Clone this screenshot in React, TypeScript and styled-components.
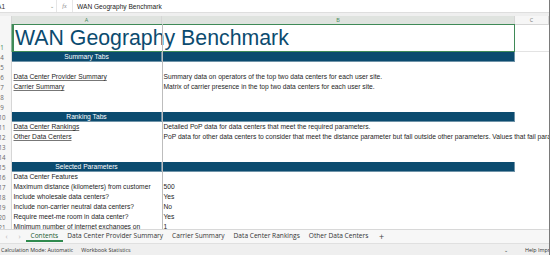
import styled, { createGlobalStyle } from "styled-components";

const Global = createGlobalStyle`
  html, body { margin: 0; padding: 0; background: #fff; }
  body {
    width: 550px;
    height: 255px;
    overflow: hidden;
    font-family: "Liberation Sans", Arial, sans-serif;
  }
`;

const BLUE = "#0b4b6f";
const GREEN = "#3f8a57";

const Window = styled.div`
  width: 550px;
  height: 255px;
  box-sizing: border-box;
  border-right: 1px solid #7a7a7a;
  display: flex;
  flex-direction: column;
  overflow: hidden;
`;

// formula bar ....
const FormulaBar = styled.div`
  height: 12px;
  flex: none;
  display: flex;
  align-items: center;
  background: #fff;
  font-size: 6.6px;
  color: #222;
`;

const NameBox = styled.div`
  width: 59px;
  height: 100%;
  display: flex;
  align-items: center;
  justify-content: space-between;
  box-sizing: border-box;
  padding: 0 2px 0 0;
  margin-left: -3px;
  color: #333;
`;

const Chevron = styled.span`
  font-size: 5px;
  color: #777;
`;

const Fx = styled.div`
  width: 15px;
  height: 100%;
  display: flex;
  align-items: center;
  justify-content: center;
  font-family: "Liberation Serif", serif;
  font-style: italic;
  font-size: 6px;
  color: #888;
  border-left: 1px solid #e6e6e6;
  border-right: 1px solid #e6e6e6;
  margin-right: 4px;
`;

const Gap = styled.div`
  height: 3px;
  flex: none;
  background: #efefef;
  border-top: 1px solid #dedede;
`;

// grid ....
const Sheet = styled.div`
  flex: 1;
  min-height: 0;
  position: relative;
  overflow: hidden;
  &::after {
    content: "";
    position: absolute;
    left: 162px;
    top: 8px;
    bottom: 0;
    width: 1px;
    background: #bdbdbd;
  }
`;

const Row = styled.div<{ $h: number }>`
  display: grid;
  grid-template-columns: 12px 150px 353px 1fr;
  height: ${(p) => p.$h}px;
`;

const ColHead = styled.div<{ $sel?: boolean }>`
  display: flex;
  align-items: center;
  justify-content: center;
  font-family: "Open Sans", sans-serif;
  font-size: 5.5px;
  color: ${(p) => (p.$sel ? GREEN : "#777")};
  background: ${(p) => (p.$sel ? "#dfe3df" : "#f6f6f6")};
  border-right: 1px solid #d6d6d6;
  border-bottom: 1px solid ${(p) => (p.$sel ? "#8fb59a" : "#d6d6d6")};
  box-sizing: border-box;
`;

const RowHead = styled.div<{ $sel?: boolean }>`
  display: flex;
  align-items: flex-end;
  overflow: hidden;
  background: #f6f6f6;
  border-right: 1px solid ${(p) => (p.$sel ? "#8fb59a" : "#d6d6d6")};
  box-sizing: border-box;
  font-family: "Open Sans", sans-serif;
  font-size: 6.2px;
  color: ${(p) => (p.$sel ? GREEN : "#666")};
`;

const RowNum = styled.span`
  display: block;
  flex: none;
  width: 22px;
  margin-left: -9px;
  text-align: center;
  line-height: 9px;
`;

const TitleCell = styled.div`
  grid-column: 2 / 4;
  box-sizing: border-box;
  border: 1px solid ${GREEN};
  border-left-width: 2px;
  display: flex;
  align-items: flex-end;
  padding: 0 0 2px 1px;
  font-size: 21.3px;
  line-height: 22px;
  color: ${BLUE};
  white-space: nowrap;
`;

const SideCell = styled.div`
  border-bottom: 1px solid #e3e3e3;
`;

const Band = styled.div`
  background: ${BLUE};
  color: #fff;
  font-size: 6.7px;
  display: flex;
  align-items: center;
  justify-content: center;
  border-bottom: 1px solid #6f93a8;
  border-right: 1px solid #6f93a8;
`;

const Cell = styled.div<{ $link?: boolean }>`
  font-size: 6.7px;
  line-height: 10px;
  color: #1e1e1e;
  padding-left: 1.5px;
  white-space: nowrap;
  text-decoration: ${(p) => (p.$link ? "underline" : "none")};
  text-decoration-color: #777;
  overflow: visible;
`;

// sheet tabs ....
const TabBar = styled.div`
  height: 13px;
  flex: none;
  display: flex;
  align-items: stretch;
  background: #f7f7f7;
  border-top: 1px solid #d8d8d8;
  font-family: "Open Sans", sans-serif;
  font-size: 6.6px;
  color: #333;
`;

const Nav = styled.span`
  width: 13px;
  display: flex;
  align-items: center;
  justify-content: center;
  color: #b5b5b5;
  font-size: 7px;
`;

const Tab = styled.span<{ $active?: boolean }>`
  display: flex;
  align-items: center;
  padding: 0 4.5px;
  box-sizing: border-box;
  color: ${(p) => (p.$active ? "#1d5a32" : "#333")};
  border-bottom: 2px solid ${(p) => (p.$active ? "#2f8a4e" : "transparent")};
  margin-bottom: 1px;
`;

const Plus = styled.span`
  display: flex;
  align-items: center;
  padding-left: 6px;
  font-size: 9px;
  color: #444;
`;

const StatusBar = styled.div`
  height: 11px;
  flex: none;
  display: flex;
  align-items: center;
  background: #efefef;
  border-top: 1px solid #e0e0e0;
  font-family: "Open Sans", sans-serif;
  font-size: 5.4px;
  color: #333;
  white-space: nowrap;
  padding-left: 1px;
  overflow: hidden;
`;

const Spacer = styled.span`
  flex: 1;
`;

const StatusItem = styled.span<{ $gap?: number }>`
  flex: none;
  margin-left: ${(p) => p.$gap ?? 0}px;
`;

const HelpText = styled.span`
  flex: none;
  width: 24px;
  margin-left: 17px;
  overflow: visible;
`;

type Line =
  | { n: number; band: string }
  | { n: number; a?: string; b?: string; link?: boolean };

const lines: Line[] = [
  { n: 4, band: "Summary Tabs" },
  { n: 5 },
  {
    n: 6,
    a: "Data Center Provider Summary",
    b: "Summary data on operators of the top two data centers for each user site.",
    link: true,
  },
  {
    n: 7,
    a: "Carrier Summary",
    b: "Matrix of carrier presence in the top two data centers for each user site.",
    link: true,
  },
  { n: 8 },
  { n: 9 },
  { n: 10, band: "Ranking Tabs" },
  {
    n: 11,
    a: "Data Center Rankings",
    b: "Detailed PoP data for data centers that meet the required parameters.",
    link: true,
  },
  {
    n: 12,
    a: "Other Data Centers",
    b: "PoP data for other data centers to consider that meet the distance parameter but fall outside other parameters.  Values that fail parameters are highlighted.",
    link: true,
  },
  { n: 13 },
  { n: 14 },
  { n: 15, band: "Selected Parameters" },
  { n: 16, a: "Data Center Features" },
  { n: 17, a: "Maximum distance (kilometers) from customer", b: "500" },
  { n: 18, a: "Include wholesale data centers?", b: "Yes" },
  { n: 19, a: "Include non-carrier neutral data centers?", b: "No" },
  { n: 20, a: "Require meet-me room in data center?", b: "Yes" },
  { n: 21, a: "Minimum number of internet exchanges on", b: "1" },
];

const tabs = [
  "Contents",
  "Data Center Provider Summary",
  "Carrier Summary",
  "Data Center Rankings",
  "Other Data Centers",
];

export default function App() {
  return (
    <>
      <Global />
      <Window>
        <FormulaBar>
          <NameBox>
            <span>A1</span>
            <Chevron>⌄</Chevron>
          </NameBox>
          <Fx>fx</Fx>
          <span>WAN Geography Benchmark</span>
        </FormulaBar>
        <Gap />
        <Sheet>
          <Row $h={8}>
            <ColHead />
            <ColHead $sel>A</ColHead>
            <ColHead $sel>B</ColHead>
            <ColHead>C</ColHead>
          </Row>
          <Row $h={28}>
            <RowHead $sel>
              <RowNum>1</RowNum>
            </RowHead>
            <TitleCell>WAN Geography Benchmark</TitleCell>
            <SideCell />
          </Row>
          {lines.map((l) =>
            "band" in l ? (
              <Row $h={10} key={l.n}>
                <RowHead>
                  <RowNum>{l.n}</RowNum>
                </RowHead>
                <Band>{l.band}</Band>
                <Band />
                <div />
              </Row>
            ) : (
              <Row $h={10} key={l.n}>
                <RowHead>
                  <RowNum>{l.n}</RowNum>
                </RowHead>
                <Cell $link={l.link}>{l.a}</Cell>
                <Cell>{l.b}</Cell>
                <div />
              </Row>
            )
          )}
        </Sheet>
        <TabBar>
          <Nav>‹</Nav>
          <Nav>›</Nav>
          {tabs.map((t, i) => (
            <Tab key={t} $active={i === 0}>
              {t}
            </Tab>
          ))}
          <Plus>+</Plus>
        </TabBar>
        <StatusBar>
          <StatusItem>Calculation Mode: Automatic</StatusItem>
          <StatusItem $gap={8}>Workbook Statistics</StatusItem>
          <Spacer />
          <StatusItem>⌄</StatusItem>
          <HelpText>Help Improve Office</HelpText>
        </StatusBar>
      </Window>
    </>
  );
}
